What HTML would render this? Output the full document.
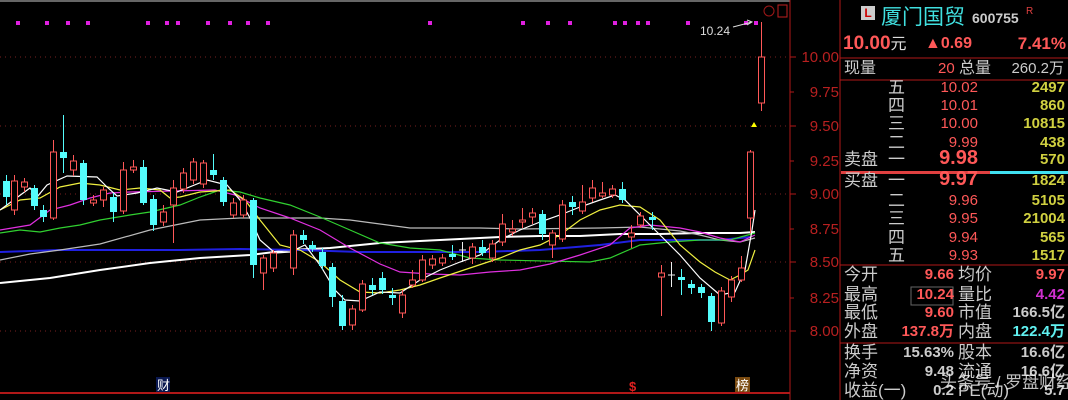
<!DOCTYPE html>
<html><head><meta charset="utf-8"><style>
body{margin:0;background:#000;width:1068px;height:400px;overflow:hidden;font-family:"Liberation Sans","Noto Sans CJK SC",sans-serif}
svg{position:absolute;left:0;top:0}
.p{position:absolute;left:841px;top:0;width:227px;height:400px}
.t{position:absolute;font-size:15px;white-space:nowrap;line-height:18px}
.r{text-align:right}
</style></head><body>
<svg width="1068" height="400" xmlns="http://www.w3.org/2000/svg">
<line x1="0" y1="1" x2="790" y2="1" stroke="#666" stroke-width="2"/>
<g stroke="#7a2020" stroke-dasharray="1,4" stroke-width="1">
<line x1="0" y1="57" x2="790" y2="57"/><line x1="0" y1="126" x2="790" y2="126"/><line x1="0" y1="194" x2="790" y2="194"/><line x1="0" y1="262" x2="790" y2="262"/><line x1="0" y1="331" x2="790" y2="331"/></g>
<line x1="790" y1="0" x2="790" y2="400" stroke="#b01818"/>
<line x1="0" y1="393" x2="790" y2="393" stroke="#b01818" stroke-width="2"/>
<line x1="840" y1="0" x2="840" y2="400" stroke="#b01818"/>
<g stroke="#b01818"><line x1="790" y1="57" x2="796" y2="57"/><line x1="790" y1="92" x2="794" y2="92"/><line x1="790" y1="126" x2="796" y2="126"/><line x1="790" y1="161" x2="794" y2="161"/><line x1="790" y1="194" x2="796" y2="194"/><line x1="790" y1="229" x2="794" y2="229"/><line x1="790" y1="262" x2="796" y2="262"/><line x1="790" y1="298" x2="794" y2="298"/><line x1="790" y1="331" x2="796" y2="331"/></g>
<g fill="#b82020" font-size="15" font-family="Liberation Sans" text-anchor="end">
<text x="839" y="62">10.00</text><text x="839" y="97">9.75</text><text x="839" y="131">9.50</text><text x="839" y="166">9.25</text><text x="839" y="199">9.00</text><text x="839" y="234">8.75</text><text x="839" y="267">8.50</text><text x="839" y="303">8.25</text><text x="839" y="336">8.00</text></g>
<circle cx="769" cy="11" r="5" fill="none" stroke="#a01818"/><rect x="778" y="5" width="9" height="12" fill="none" stroke="#c02020"/>
<g fill="#e020e0">
<rect x="16" y="21" width="4" height="4"/><rect x="45" y="21" width="4" height="4"/><rect x="66" y="21" width="4" height="4"/><rect x="86" y="21" width="4" height="4"/><rect x="146" y="21" width="4" height="4"/><rect x="165" y="21" width="4" height="4"/><rect x="176" y="21" width="4" height="4"/><rect x="206" y="21" width="4" height="4"/><rect x="228" y="21" width="4" height="4"/><rect x="246" y="21" width="4" height="4"/><rect x="266" y="21" width="4" height="4"/><rect x="428" y="21" width="4" height="4"/><rect x="521" y="21" width="4" height="4"/><rect x="546" y="21" width="4" height="4"/><rect x="568" y="21" width="4" height="4"/><rect x="613" y="21" width="4" height="4"/><rect x="623" y="21" width="4" height="4"/><rect x="636" y="21" width="4" height="4"/><rect x="646" y="21" width="4" height="4"/><rect x="686" y="21" width="4" height="4"/><rect x="744" y="21" width="4" height="4"/><rect x="754" y="21" width="4" height="4"/></g>
<text x="700" y="35" fill="#ddd" font-size="12">10.24</text>
<path d="M733 27 L752 22 M747 20 L752 22 L747 25" stroke="#ddd" fill="none"/>
<polygon points="751,127 754,122 757,127" fill="#ff0"/>
<g fill="none" stroke-width="1.2">
<polyline stroke="#ffffff" points="0,283 50,278 100,270 150,263 200,258 250,255 290,250 330,248 380,243 420,241 460,239 500,237 540,236 580,236 620,234 660,234 700,233 740,233 755,232" stroke-width="2"/>
<polyline stroke="#2020e0" stroke-width="2" points="0,252 60,250 120,250 180,250 240,249 300,250 360,252 420,252 480,252 540,250 600,245 640,240 680,240 720,240 750,237"/>
<polyline stroke="#bbb" points="0,260 30,254 60,250 100,244 150,230 200,220 240,218 290,218 320,218 350,220 380,224 410,228 480,228 520,229 600,228 640,227 680,231 700,235 720,240 740,242 755,238"/>
<polyline stroke="#30d030" points="0,233 20,230 40,232 60,228 80,225 100,220 130,215 150,212 180,205 200,197 220,190 240,192 260,198 290,205 320,217 350,230 380,243 410,248 440,250 470,258 500,260 590,262 610,258 640,245 670,242 700,240 730,240 755,233"/>
<polyline stroke="#e030e0" points="0,230 30,225 50,210 70,205 90,198 110,193 130,192 215,190 235,195 260,208 290,218 320,230 350,248 380,264 400,272 430,274 460,275 490,272 520,270 550,264 580,255 610,245 630,228 650,225 680,228 700,232 720,238 740,242 755,235"/>
<polyline stroke="#f0f040" points="0,210 20,200 40,198 60,187 80,183 100,185 120,190 140,188 160,190 170,198 180,197 200,192 230,190 245,200 260,220 280,245 300,250 320,262 340,280 360,292 380,293 400,290 420,285 440,278 470,268 500,258 520,250 540,245 560,235 580,220 600,210 620,205 640,207 660,220 680,245 700,262 715,272 730,280 740,275 748,270 755,250"/>
<polyline stroke="#fff" points="0,210 30,188 37,197 47,185 67,176 97,177 107,187 117,196 137,193 157,188 177,192 207,180 227,185 240,200 250,218 260,240 275,253 290,252 305,245 320,265 335,290 345,300 360,301 380,292 400,293 420,280 440,270 460,262 480,255 500,240 520,230 540,222 560,215 580,207 600,200 615,195 625,200 640,215 660,235 680,255 700,278 720,295 735,292 745,270 752,230 755,210"/>
</g>
<g id="c"></g>
<rect x="156" y="377" width="14" height="15" fill="#0a1850"/><text x="157" y="390" fill="#fff" font-size="13" font-family="Noto Sans CJK SC">财</text>
<text x="629" y="391" fill="#e02020" font-size="13" font-weight="bold">$</text>
<rect x="735" y="377" width="15" height="15" fill="#7a4a10"/><text x="736" y="390" fill="#fff" font-size="13" font-family="Noto Sans CJK SC">榜</text>
<g stroke="#b01818"><line x1="840" y1="58" x2="1068" y2="58"/><line x1="840" y1="80" x2="1068" y2="80"/><line x1="840" y1="265" x2="1068" y2="265"/><line x1="840" y1="343" x2="1068" y2="343"/></g>
<rect x="841" y="171" width="149" height="3" fill="#e04040"/><rect x="990" y="171" width="78" height="3" fill="#40e0f0"/>
<rect x="911" y="287" width="42" height="18" fill="none" stroke="#666"/>
</svg>
<script>
var C=[[0,'c',181,197,175,205],[8,'r',181,210,175,215],[18,'r',182,187,178,192],[28,'c',188,206,185,210],[37,'c',210,217,205,222],[47,'r',152,218,140,220],[57,'c',152,158,115,173],[67,'r',161,170,155,176],[77,'c',163,200,160,205],[87,'r',200,203,195,206],[97,'r',190,200,187,207],[107,'c',197,212,193,222],[117,'r',170,211,162,214],[127,'r',167,170,160,173],[137,'c',167,203,160,205],[147,'c',199,225,195,231],[157,'r',212,222,205,226],[167,'r',188,205,180,243],[177,'r',173,189,168,193],[187,'r',162,180,158,184],[197,'r',163,184,160,188],[207,'c',170,175,154,180],[217,'c',180,202,177,206],[227,'r',203,215,198,218],[237,'r',200,215,195,218],[247,'c',200,265,198,278],[257,'r',258,273,255,290],[267,'r',253,268,250,272],[287,'r',235,268,230,275],[297,'c',235,240,230,244],[306,'c',245,249,241,252],[316,'c',252,266,248,270],[326,'c',267,297,263,307],[336,'c',301,326,295,330],[346,'r',309,325,305,330],[356,'r',284,310,280,312],[366,'c',285,290,278,295],[376,'c',278,290,272,294],[386,'c',295,298,288,305],[396,'r',295,313,290,318],[406,'r',280,285,270,288],[416,'r',260,280,255,282],[426,'r',259,265,255,269],[436,'r',258,263,254,266],[446,'c',254,257,245,260],[456,'w',250,251,242,262],[466,'r',247,258,243,264],[476,'c',247,253,240,256],[486,'r',244,258,240,262],[496,'r',224,242,214,246],[506,'r',229,232,220,236],[516,'r',220,222,208,228],[526,'r',213,217,208,224],[536,'c',214,234,210,240],[546,'r',233,245,230,258],[556,'r',205,239,200,242],[566,'c',202,207,196,215],[576,'r',202,211,185,214],[586,'r',188,198,180,202],[596,'r',193,196,182,198],[606,'r',189,195,185,198],[616,'c',189,200,182,203],[625,'r',233,237,225,248],[634,'r',216,225,212,228],[646,'c',217,220,212,230],[655,'r',273,277,265,316],[665,'w',275,276,262,287],[675,'c',277,280,269,295],[685,'c',284,288,280,294],[695,'c',287,293,284,298],[705,'c',296,322,293,331],[715,'r',291,323,287,326],[725,'r',280,297,276,302],[735,'r',268,280,256,282],[744,'r',152,218,150,233],[755,'r',57,103,22,111]];
var s='';C.forEach(function(a){var x=a[0]+3,col=a[1]=='c'?'#54fcfc':a[1]=='w'?'#eee':'#ff5858';
s+='<line x1="'+(x+3.5)+'" y1="'+a[4]+'" x2="'+(x+3.5)+'" y2="'+a[5]+'" stroke="'+col+'"/>';
if(a[1]=='c')s+='<rect x="'+x+'" y="'+a[2]+'" width="7" height="'+Math.max(a[3]-a[2],1)+'" fill="'+col+'"/>';
else if(a[1]=='w')s+='<line x1="'+x+'" y1="'+a[2]+'" x2="'+(x+7)+'" y2="'+a[2]+'" stroke="'+col+'"/>';
else s+='<rect x="'+(x+.5)+'" y="'+a[2]+'" width="6" height="'+Math.max(a[3]-a[2],1)+'" fill="#000" stroke="'+col+'"/>';});
document.getElementById('c').innerHTML=s;
</script>
<div class="p">
<div style="position:absolute;left:20px;top:6px;width:14px;height:14px;background:#ccc;color:#c00;font-size:12px;font-weight:bold;text-align:center;line-height:14px">L</div>
<div class="t" style="left:40px;top:3px;color:#40e0e0;font-size:21px;line-height:26px;font-family:'Noto Sans CJK SC',sans-serif">厦门国贸</div>
<div class="t" style="left:131px;top:9px;color:#ccc;font-size:14px;font-weight:bold">600755</div>
<div class="t" style="left:185px;top:3px;color:#e04040;font-size:10px">R</div>
<div class="t" style="left:2px;top:35px;color:#ff5858;font-size:19px;font-weight:bold">10.00<span style="font-size:16px;font-weight:normal;color:#ddd">元</span></div>
<div class="t" style="left:84px;top:35px;color:#ff5858;font-size:16px;font-weight:bold">▲0.69</div>
<div class="t r" style="right:2px;top:35px;color:#ff5858;font-size:17px;font-weight:bold">7.41%</div>
<div class="t" style="left:3px;top:60px;color:#ccc;font-size:16px">现量</div>
<div class="t" style="left:97px;top:60px;color:#ff5858">20</div>
<div class="t" style="left:118px;top:60px;color:#ccc;font-size:16px">总量</div>
<div class="t r" style="right:4px;top:60px;color:#ccc">260.2万</div>
<div id="ob"></div>
</div>
<script>
var L=[[88,'','五','10.02','2497'],[106,'','四','10.01','860'],[124,'','三','10.00','10815'],[143,'','二','9.99','438'],[162,'卖盘','一','9.98','570',1],[183,'买盘','一','9.97','1824',1],[201,'','二','9.96','5105'],[219,'','三','9.95','21004'],[238,'','四','9.94','565'],[256,'','五','9.93','1517']];
var h='';L.forEach(function(a){var b=a[5],t=a[0]-(b?11:9);
h+='<div class="t" style="left:3px;top:'+t+'px;color:#ccc;font-size:17px">'+a[1]+'</div>';
h+='<div class="t" style="left:47px;top:'+t+'px;color:#ccc;font-size:17px">'+a[2]+'</div>';
h+='<div class="t r" style="right:90px;top:'+(b?t-2:t)+'px;color:#ff5858;'+(b?'font-size:20px;font-weight:bold':'')+'">'+a[3]+'</div>';
h+='<div class="t r" style="right:3px;top:'+t+'px;color:#d0d040;font-weight:bold">'+a[4]+'</div>';});
var R=[[276,'今开','9.66','#ff5858','均价','9.97','#ff5858'],[296,'最高','10.24','#ff5858','量比','4.42','#d030d0'],[314,'最低','9.60','#ff5858','市值','166.5亿','#ccc'],[333,'外盘','137.8万','#ff5858','内盘','122.4万','#60f0f0'],[354,'换手','15.63%','#ccc','股本','16.6亿','#ccc'],[373,'净资','9.48','#ccc','流通','16.6亿','#ccc'],[392,'收益(一)','0.2','#ccc','PE(动)','5.7','#ccc']];
R.forEach(function(a){var t=a[0]-10;
h+='<div class="t" style="left:3px;top:'+t+'px;color:#ccc;font-size:17px">'+a[1]+'</div>';
h+='<div class="t r" style="right:114px;top:'+t+'px;color:'+a[3]+';font-weight:bold">'+a[2]+'</div>';
h+='<div class="t" style="left:117px;top:'+t+'px;color:#ccc;font-size:17px">'+a[4]+'</div>';
h+='<div class="t r" style="right:3px;top:'+t+'px;color:'+a[6]+';font-weight:bold">'+a[5]+'</div>';});
h+='<div class="t" style="left:99px;top:374px;color:rgba(255,255,255,.75);font-size:17px">头条号 / 罗盘财经</div>';
document.getElementById('ob').innerHTML=h;
</script>
</body></html>
